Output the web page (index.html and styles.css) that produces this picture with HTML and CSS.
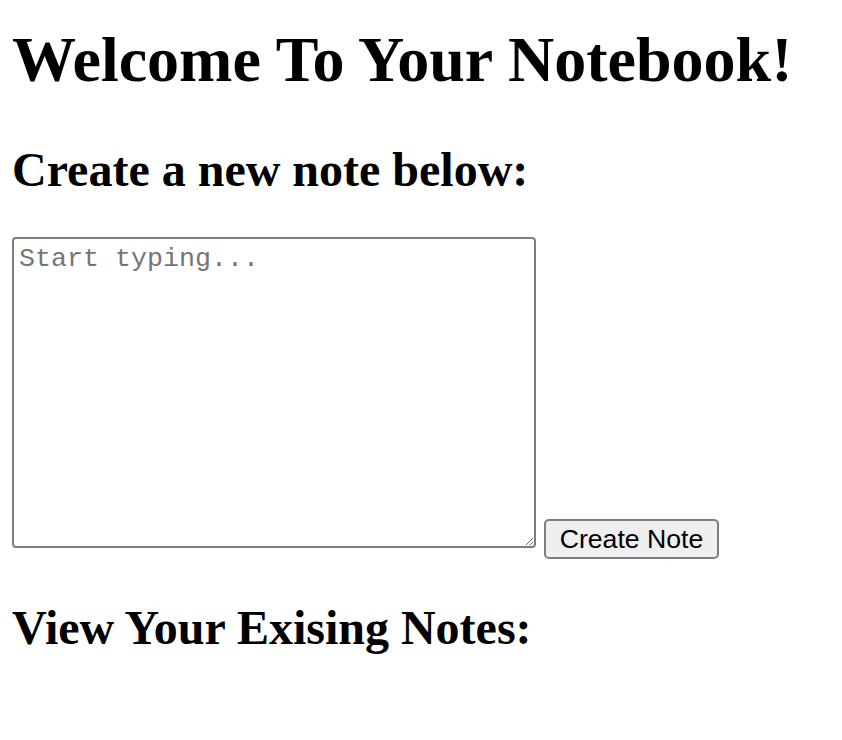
FILE: index.html
```html
<!DOCTYPE html>
<html>
<head>
<meta charset="utf-8">
<title>Notebook</title>
<link rel="stylesheet" href="styles.css">
</head>
<body>
<h1 class="title">Welcome To Your Notebook!</h1>
<h2 class="heading create-heading">Create a new note below:</h2>
<div class="note-row">
  <textarea class="note-input" placeholder="Start typing..."></textarea>
  <button class="create-btn" type="button">Create Note</button>
</div>
<h2 class="heading view-heading">View Your Exising Notes:</h2>
</body>
</html>
```

FILE: styles.css
```css
html, body {
  background: #ffffff;
}
body {
  margin: 0;
  padding: 23px 12px;
  font-family: "Liberation Serif", "Times New Roman", serif;
  color: #000;
}
.title {
  font-size: 64px;
  font-weight: bold;
  margin: 0 0 45px;
}
.heading {
  font-size: 48px;
  font-weight: bold;
  margin: 0;
}
.create-heading {
  margin-bottom: 40px;
}
.note-row {
  display: flex;
  align-items: flex-end;
  gap: 8px;
}
.note-input {
  box-sizing: border-box;
  width: 524px;
  height: 311px;
  margin: 0;
  padding: 5px 5px;
  border: 2px solid #7d7d7d;
  border-radius: 4px;
  font-family: "Liberation Mono", "Courier New", monospace;
  font-size: 26.67px;
  background: #fff;
}
.note-input::placeholder {
  color: #757575;
}
.create-btn {
  box-sizing: border-box;
  width: 175px;
  height: 40px;
  margin: 0 0 -11px;
  padding: 0;
  border: 2px solid #7d7d7d;
  border-radius: 5px;
  background: #efefef;
  font-family: "Liberation Sans", Arial, sans-serif;
  font-size: 26.67px;
  color: #000;
}
.view-heading {
  margin-top: 52px;
}
```
